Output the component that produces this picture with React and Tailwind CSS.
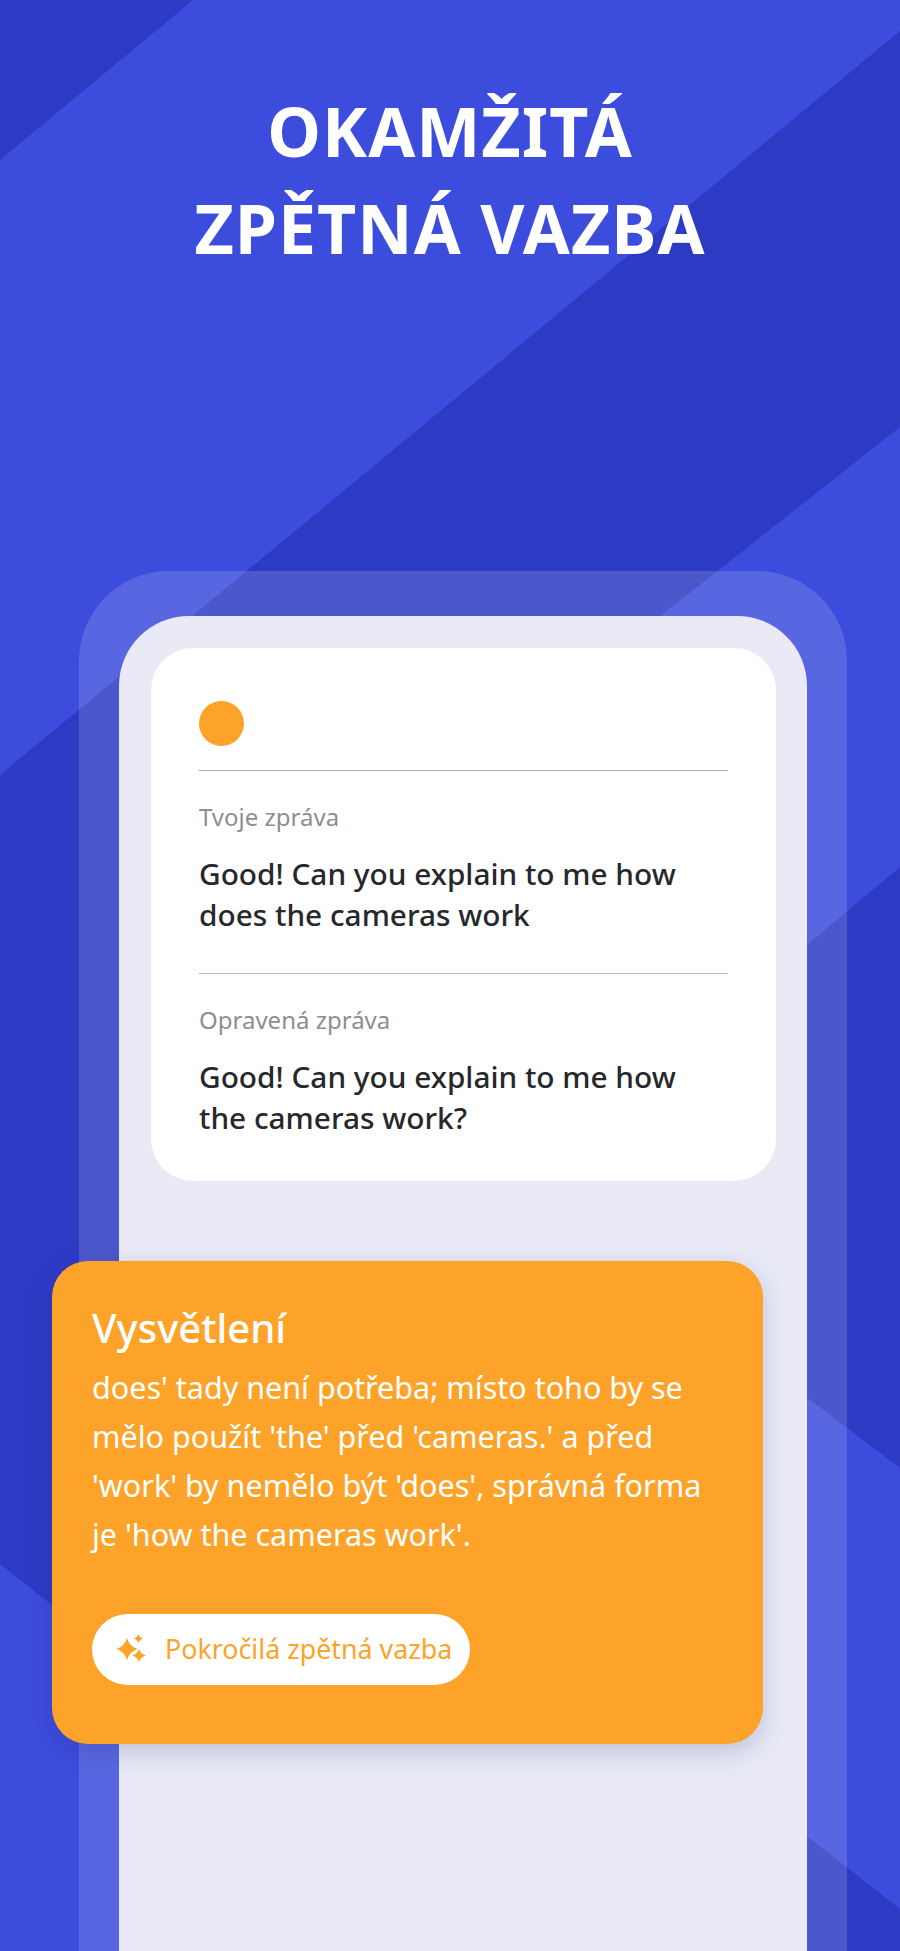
function Sparkles() {
  return (
    <svg width="32" height="32" viewBox="0 0 32 32" className="shrink-0" fill="#fda32a">
      <path d="M11 4Q13.500 12.500 21.500 15Q13.500 17.500 11 26Q8.500 17.500 0.500 15Q8.500 12.500 11 4Z" />
      <path d="M22.500 0Q23.500 3.500 27 4.500Q23.500 5.500 22.500 9Q21.500 5.500 18 4.500Q21.500 3.500 22.500 0Z" />
      <path d="M23 15Q24.500 20 30 21.500Q24.500 23 23 28Q21.500 23 16 21.500Q21.500 20 23 15Z" />
    </svg>
  )
}

function Message({ label, children }) {
  return (
    <div className="pt-[31px]">
      <div className="text-[24px] leading-[30px] text-[#8e8e8e]">{label}</div>
      <div className="mt-[21px] text-[29.800px] leading-[41px] font-medium text-[#26282b]">{children}</div>
    </div>
  )
}

export default function App() {
  return (
    <div className="relative w-[900px] h-[1951px] overflow-hidden bg-[#3c4cdc] font-['Noto_Sans',sans-serif]">
      {/* background stripes */}
      <svg className="absolute inset-0" width="900" height="1951" viewBox="0 0 900 1951" fill="#2d3ac4">
        <polygon points="0,0 193,0 0,160" />
        <polygon points="900,31 0,775 0,1564 300,1800 300,900 900,427" />
        <polygon points="900,867 600,1118 600,1240 809,1399 900,1468" />
        <polygon points="700,1752 900,1909 900,1951 700,1951" />
      </svg>

      <div className="relative flex flex-col h-full">
        <h1 className="h-[571px] pt-[82px] text-center text-[68px] leading-[97px] font-bold tracking-[1px] text-white">
          OKAMŽITÁ<br />ZPĚTNÁ VAZBA
        </h1>

        <div className="flex-1 ml-[79px] mr-[53px] px-[40px] pt-[45px] rounded-t-[90px] bg-white/15">
          <div className="h-full pl-[32px] pr-[31px] pt-[32px] rounded-t-[70px] bg-[#e9eaf6]">
            <div className="px-[48px] pt-[53px] pb-[43px] rounded-[42px] bg-white">
              <div className="w-[45px] h-[45px] rounded-full bg-[#fda32a]" />
              <div className="mt-[24px] border-t border-[#a8a8a8]" />
              <Message label="Tvoje zpráva">
                Good! Can you explain to me how<br />does the cameras work
              </Message>
              <div className="mt-[38px] border-t border-[#b8b8b8]" />
              <Message label="Opravená zpráva">
                Good! Can you explain to me how<br />the cameras work?
              </Message>
            </div>
          </div>
        </div>
      </div>

      {/* orange card sits over the phone */}
      <div className="absolute left-[52px] top-[1261px] w-[711px] h-[483px] pl-[40px] pt-[37px] rounded-[36px] bg-[#fda32a] text-white shadow-[0_8px_24px_rgba(40,50,120,0.22)]">
        <div className="text-[40px] leading-[60px] font-medium">Vysvětlení</div>
        <p className="mt-[5px] text-[30.500px] leading-[49px]">
          does' tady není potřeba; místo toho by se<br />
          mělo použít 'the' před 'cameras.' a před<br />
          'work' by nemělo být 'does', správná forma<br />
          je 'how the cameras work'.
        </p>
        <button className="flex items-center gap-[17px] h-[71px] mt-[55px] pl-[24px] pr-[18px] rounded-full bg-white text-[26.800px] text-[#fda32a]">
          <Sparkles />
          Pokročilá zpětná vazba
        </button>
      </div>
    </div>
  )
}
